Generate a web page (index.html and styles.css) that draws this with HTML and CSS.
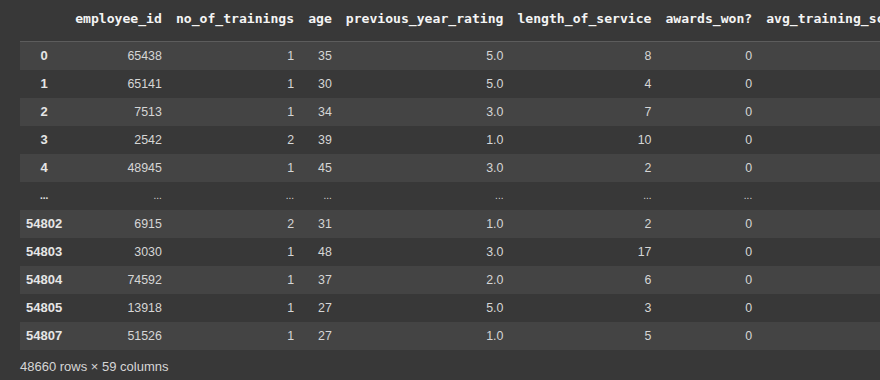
FILE: index.html
```html
<!DOCTYPE html>
<html>
<head>
<meta charset="utf-8">
<link rel="stylesheet" href="styles.css">
</head>
<body>
<div class="output">
<div class="scroll">
<table class="df">
<thead>
<tr><th class="idx"></th><th>employee_id</th><th>no_of_trainings</th><th>age</th><th>previous_year_rating</th><th>length_of_service</th><th>awards_won?</th><th>avg_training_score</th></tr>
</thead>
<tbody>
<tr><th class="idx">0</th><td>65438</td><td>1</td><td>35</td><td>5.0</td><td>8</td><td>0</td><td>49</td></tr>
<tr><th class="idx">1</th><td>65141</td><td>1</td><td>30</td><td>5.0</td><td>4</td><td>0</td><td>60</td></tr>
<tr><th class="idx">2</th><td>7513</td><td>1</td><td>34</td><td>3.0</td><td>7</td><td>0</td><td>50</td></tr>
<tr><th class="idx">3</th><td>2542</td><td>2</td><td>39</td><td>1.0</td><td>10</td><td>0</td><td>50</td></tr>
<tr><th class="idx">4</th><td>48945</td><td>1</td><td>45</td><td>3.0</td><td>2</td><td>0</td><td>73</td></tr>
<tr class="dots"><th class="idx">...</th><td>...</td><td>...</td><td>...</td><td>...</td><td>...</td><td>...</td><td>...</td></tr>
<tr><th class="idx">54802</th><td>6915</td><td>2</td><td>31</td><td>1.0</td><td>2</td><td>0</td><td>49</td></tr>
<tr><th class="idx">54803</th><td>3030</td><td>1</td><td>48</td><td>3.0</td><td>17</td><td>0</td><td>78</td></tr>
<tr><th class="idx">54804</th><td>74592</td><td>1</td><td>37</td><td>2.0</td><td>6</td><td>0</td><td>56</td></tr>
<tr><th class="idx">54805</th><td>13918</td><td>1</td><td>27</td><td>5.0</td><td>3</td><td>0</td><td>79</td></tr>
<tr><th class="idx">54807</th><td>51526</td><td>1</td><td>27</td><td>1.0</td><td>5</td><td>0</td><td>49</td></tr>
</tbody>
</table>
</div>
<div class="shape">48660 rows × 59 columns</div>
</div>
</body>
</html>
```
FILE: styles.css
```css
html, body {
  margin: 0;
  padding: 0;
  background: #383838;
  overflow: hidden;
}
body {
  width: 880px;
  height: 380px;
}
.output {
  padding-left: 20px;
  font-family: "Liberation Sans", Arial, sans-serif;
  color: #d6d6d6;
}
.scroll {
  width: 860px;
  overflow: hidden;
}
.df {
  border-collapse: collapse;
  border-spacing: 0;
  white-space: nowrap;
}
.df thead th {
  font-family: "DejaVu Sans Mono", monospace;
  font-weight: bold;
  font-size: 13.1px;
  color: #f4f4f4;
  text-align: right;
  padding: 8px 7px 12px 7px;
  line-height: 21px;
  height: 21px;
  border-bottom: 1px solid #5c5c5c;
}
.df tbody td, .df tbody th {
  height: 28px;
  padding: 0 7px;
  line-height: 28px;
  font-size: 12.4px;
  text-align: right;
}
.df tbody th.idx {
  font-weight: bold;
  font-size: 13px;
  color: #e6e6e6;
  text-align: center;
  padding: 0 6px;
}
.df tbody tr:nth-child(odd) {
  background: #444444;
}
.df tbody tr:nth-child(even) {
  background: #383838;
}
.df tr.dots td, .df tr.dots th {
  font-size: 10px;
}
.shape {
  font-size: 13px;
  color: #d6d6d6;
  line-height: 17px;
  padding-top: 8px;
}
```
